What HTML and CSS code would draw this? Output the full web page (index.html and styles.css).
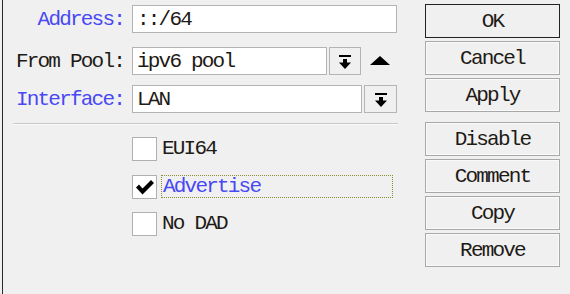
FILE: index.html
```html
<!DOCTYPE html>
<html>
<head>
    <title>IPv6 Address</title>
    <meta name="viewport" content="width=device-width, initial-scale=1">
    <link rel="stylesheet" href="styles.css">
</head>
<body>

    <div class="window">
        <div class="edge"></div>

        <div class="form">
            <div class="row">
                <label class="label blue">Address:</label>
                <div class="field addr">::/64</div>
            </div>
            <div class="row pool">
                <label class="label">From Pool:</label>
                <div class="field pool-field">ipv6 pool</div>
                <button class="drop">
                    <svg width="12" height="14" viewBox="0 0 12 14"><rect x="0" y="0" width="12" height="2"/><rect x="4" y="4" width="4" height="4"/><polygon points="0,7.5 12,7.5 6,14"/></svg>
                </button>
                <span class="up"></span>
            </div>
            <div class="row iface">
                <label class="label blue">Interface:</label>
                <div class="field iface-field">LAN</div>
                <button class="drop wide">
                    <svg width="12" height="14" viewBox="0 0 12 14"><rect x="0" y="0" width="12" height="2"/><rect x="4" y="4" width="4" height="4"/><polygon points="0,7.5 12,7.5 6,14"/></svg>
                </button>
            </div>

            <div class="sep"></div>

            <div class="checks">
                <div class="check">
                    <span class="box"></span>
                    <span class="text">EUI64</span>
                </div>
                <div class="check">
                    <span class="box">
                        <svg width="22" height="22" viewBox="0 0 22 22"><path d="M2 11.5 L5 8.5 L8.5 12.5 L17 4 L20 7 L8.5 18.5 Z"/></svg>
                    </span>
                    <span class="text blue focus">Advertise</span>
                </div>
                <div class="check">
                    <span class="box"></span>
                    <span class="text">No DAD</span>
                </div>
            </div>
        </div>

        <div class="actions">
            <button class="btn default">OK</button>
            <button class="btn">Cancel</button>
            <button class="btn">Apply</button>
            <button class="btn group">Disable</button>
            <button class="btn">Comment</button>
            <button class="btn">Copy</button>
            <button class="btn">Remove</button>
        </div>
    </div>

</body>
</html>
```

FILE: styles.css
```css
* {
    box-sizing: border-box;
}

body {
    margin: 0;
    padding: 0;
    background-color: #f0f0f0;
    font-family: "Liberation Mono", "DejaVu Sans Mono", monospace;
    font-size: 21px;
    letter-spacing: -1.8px;
    color: #1e1a16;
}

.window {
    display: flex;
    height: 294px;
}

.edge {
    width: 3px;
    border-right: 1px solid #2a2a2a;
}

.form {
    width: 395px;
    padding-top: 5px;
}

.row {
    display: flex;
    align-items: center;
    height: 28px;
}

.pool {
    margin-top: 14px;
}

.iface {
    margin-top: 10px;
}

.label {
    width: 121px;
    margin-right: 8px;
    text-align: right;
    white-space: nowrap;
}

.blue {
    color: #4848f4;
}

.field {
    height: 28px;
    line-height: 27px;
    padding-left: 4px;
    background-color: #fff;
    border: 1px solid #b4b4b4;
    white-space: nowrap;
}

.addr {
    width: 265px;
}

.pool-field {
    width: 195px;
}

.iface-field {
    width: 230px;
}

.drop {
    width: 32px;
    height: 28px;
    margin-left: 2px;
    padding: 0;
    border: 1px solid #b4b4b4;
    background-color: #f0f0f0;
    display: flex;
    align-items: center;
    justify-content: center;
}

.drop.wide {
    width: 33px;
}

.drop svg {
    fill: #000;
    margin-top: 1px;
}

.up {
    margin-left: 9px;
    margin-top: -2px;
    width: 0;
    height: 0;
    border-left: 10px solid transparent;
    border-right: 10px solid transparent;
    border-bottom: 9px solid #000;
}

.sep {
    margin: 10px 0 0 10px;
    width: 385px;
    border-top: 1px solid #c8c8c8;
    border-bottom: 1px solid #fafafa;
}

.checks {
    margin: 12px 0 0 129px;
    display: flex;
    flex-direction: column;
    gap: 13.5px;
}

.check {
    display: flex;
    align-items: center;
    height: 24px;
}

.box {
    width: 25px;
    height: 24px;
    background-color: #fff;
    border: 1px solid #b0b0b0;
    display: flex;
    align-items: center;
    justify-content: center;
}

.box svg {
    fill: #000;
}

.text {
    margin-left: 5px;
    line-height: 24px;
    white-space: nowrap;
}

.focus {
    margin-left: 4px;
    width: 232px;
    height: 23px;
    line-height: 22px;
    padding-left: 1px;
    border: 1px dotted #8c8c30;
}

.actions {
    margin-left: 27px;
    padding-top: 4px;
    display: flex;
    flex-direction: column;
    gap: 3px;
}

.btn {
    width: 135px;
    height: 34px;
    padding: 1px 0 0;
    font-family: inherit;
    font-size: 21px;
    letter-spacing: -1.8px;
    color: #1e1a16;
    background-color: #f0f0f0;
    border: 1px solid #a8a8a8;
    box-shadow: inset 0 0 0 1px #fafafa;
}

.btn.default {
    border-color: #222;
    box-shadow: none;
}

.btn.group {
    margin-top: 7px;
}
```
